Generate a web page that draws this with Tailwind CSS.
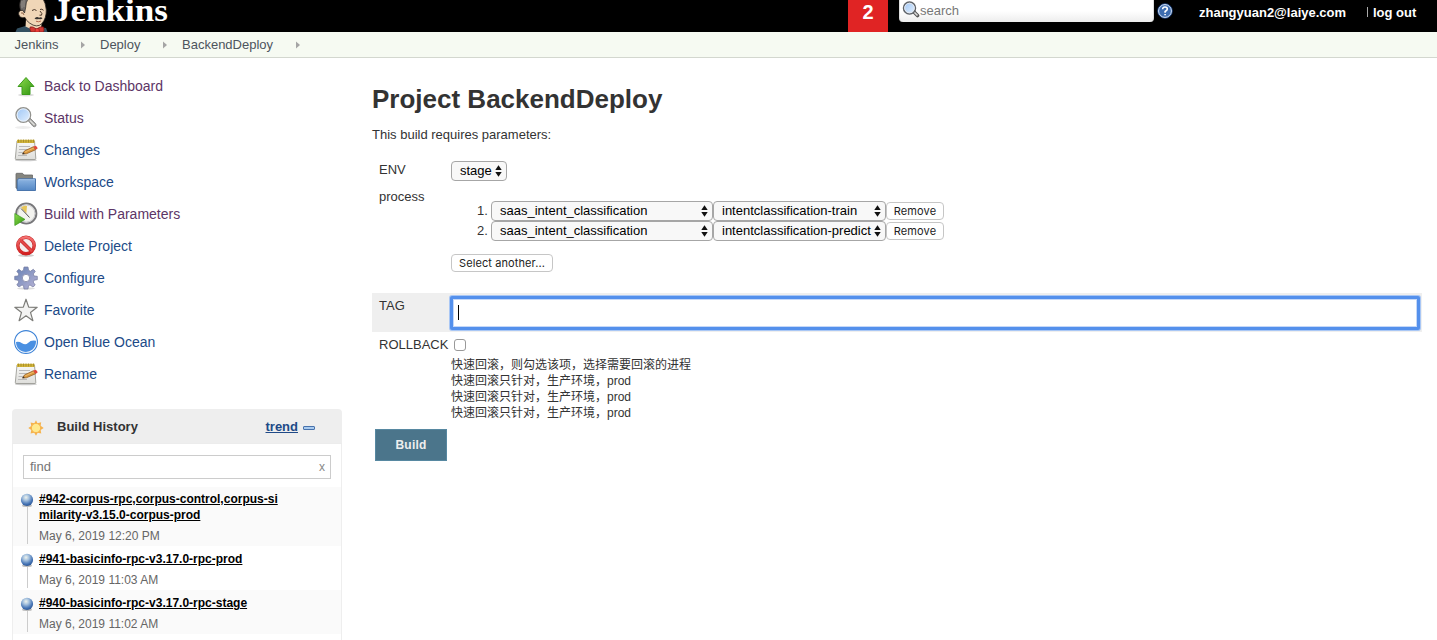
<!DOCTYPE html>
<html lang="zh-CN">
<head>
<meta charset="utf-8">
<title>BackendDeploy [Jenkins]</title>
<script src="https://cdn.jsdelivr.net/npm/@tailwindcss/browser@4"></script>
</head>
<body class="w-[1437px] h-[640px] overflow-hidden bg-white text-[13px] leading-4 text-[#333] whitespace-nowrap font-['Liberation_Sans','Noto_Sans_CJK_SC',sans-serif]">
<svg class="absolute w-0 h-0" aria-hidden="true">
  <defs>
    <linearGradient id="green" x1="0" y1="0" x2="1" y2="1"><stop offset="0" stop-color="#8fdc4e"/><stop offset="1" stop-color="#2f9410"/></linearGradient>
    <linearGradient id="glass" x1="0" y1="0" x2="1" y2="1"><stop offset="0" stop-color="#9cc4f5"/><stop offset="1" stop-color="#e6f2fe"/></linearGradient>
    <linearGradient id="folder" x1="0" y1="0" x2="0" y2="1"><stop offset="0" stop-color="#8db5e2"/><stop offset="1" stop-color="#5487c4"/></linearGradient>
    <linearGradient id="gear" x1="0" y1="0" x2="1" y2="1"><stop offset="0" stop-color="#6580b4"/><stop offset="1" stop-color="#b9b4d6"/></linearGradient>
    <linearGradient id="paper" x1="0" y1="0" x2="0" y2="1"><stop offset="0" stop-color="#f8f8f6"/><stop offset="1" stop-color="#dededb"/></linearGradient>
    <linearGradient id="red" x1="0" y1="0" x2="0" y2="1"><stop offset="0" stop-color="#f47272"/><stop offset="1" stop-color="#d42020"/></linearGradient>
    <radialGradient id="ball" cx=".42" cy=".3" r=".7"><stop offset="0" stop-color="#eef2ec"/><stop offset=".35" stop-color="#a6c2de"/><stop offset=".75" stop-color="#4a78b8"/><stop offset="1" stop-color="#2c5796"/></radialGradient>
    <symbol id="notepad" viewBox="0 0 24 24">
      <ellipse cx="12" cy="22.200" rx="11" ry="1" fill="#ccc"/>
      <path d="M3 3H20.500L21.800 20.500Q21.800 21.500 21 21.500H2Q1.200 21.500 1.300 20.500Z" fill="url(#paper)" stroke="#92928c" stroke-width=".8"/>
      <path d="M3 1.800H20.500V5H3Z" fill="#d2b43a"/>
      <path d="M4.500 1.500V4.500M7 1.500V4.500M9.500 1.500V4.500M12 1.500V4.500M14.500 1.500V4.500M17 1.500V4.500M19.500 1.500V4.500" stroke="#9a8222" stroke-width=".7"/>
      <path d="M5 8.500H16M5 11.500H13M4.500 14.500H10M4 17.500H13" stroke="#b9b9b9" stroke-width="1"/>
      <path d="M8.500 16L10.500 12.900L19.500 8.700L21.700 11.700L12.400 15.800Z" fill="#d9963c" stroke="#8a5518" stroke-width=".7"/>
      <path d="M11 14L20.300 9.800" stroke="#f3c474" stroke-width=".8"/>
      <path d="M19.200 8.800L21.500 7.700Q23.800 8.500 23.500 10.700L21.500 11.800Z" fill="#e2473c"/>
      <path d="M8.300 16.300L9.400 14.500L10.800 15.900Z" fill="#333"/>
    </symbol>
    <symbol id="lens" viewBox="0 0 24 24">
      <path d="M13.500 14L16 12L21.500 17.500Q22.700 19 21.700 20.200Q20.400 21.300 19 20.300Z" fill="#a3a3a0" stroke="#777" stroke-width=".7"/>
      <path d="M15.800 14.400L20.500 19" stroke="#e7e7e4" stroke-width="1.100"/>
      <circle cx="9.300" cy="9" r="7.300" fill="url(#glass)" stroke="#92928e" stroke-width="1.400"/>
      <circle cx="9.300" cy="9" r="6.200" fill="none" stroke="#eef4fb" stroke-width=".9"/>
    </symbol>
    <symbol id="bead" viewBox="0 0 14 14"><ellipse cx="7" cy="12.700" rx="5" ry="1.200" fill="#bbb"/><circle cx="7" cy="6.900" r="6.100" fill="url(#ball)"/></symbol>
    <symbol id="arrows" viewBox="0 0 7 12"><path d="M3.500 .2L6.700 5H.3ZM3.500 11.800L6.700 7H.3Z" fill="#111"/></symbol>
  </defs>
</svg>

<header class="flex h-8 bg-black text-white overflow-hidden">
  <svg class="w-[180px] h-8 shrink-0" viewBox="0 0 180 32">
    <path d="M15.500 32L17 28.500L27 25.500L38 27L46 28L47.500 32Z" fill="#335061"/>
    <path d="M26 19L25.500 26.500L33 30L41 29L42 20Z" fill="#f0d6b7"/>
    <path d="M28 -3H42Q46 3 46.300 10Q46.500 18 42 23.500Q37 28.500 29.500 23Q26 20.500 25 17.500Q19.500 18.500 18.600 14Q18.600 10 23 10Q22 1 28 -3Z" fill="#f0d6b7" stroke="#2b2520" stroke-width=".8"/>
    <path d="M20.500 10.500Q18.500 4 21 -1H28Q25.800 2 25.600 8L24.500 13L22.500 10Z" fill="#6f6a68" stroke="#292522" stroke-width=".7"/>
    <path d="M22 1V8M24 0V7" stroke="#aaa29c" stroke-width=".7"/>
    <path d="M21 13Q23.500 12 24 15" fill="none" stroke="#7b4d32" stroke-width=".8"/>
    <path d="M32 10.500Q34.500 8.500 36.500 10.500M40 9.500Q42 8.500 43.500 10.300M40 11Q43 14 41.500 15.200H39.500" fill="none" stroke="#39271b" stroke-width=".9"/>
    <path d="M34.500 18.500Q37 16.200 39 17.700Q41 16.400 42.500 18.200Q41 19.800 39 18.900Q37 20 34.500 18.500Z" fill="#39342f"/>
    <path d="M36 21.200Q38.500 22.400 41 21" fill="none" stroke="#a64c34" stroke-width=".8"/>
    <path d="M35 28L38 32H42L43 28Z" fill="#f7f7f4"/>
    <path d="M30 27Q32.500 26 36.500 29Q40.500 26 43.500 27Q44.500 30 43.500 32H31Q29.500 29.500 30 27Z" fill="#d33833" stroke="#7c1917" stroke-width=".7"/>
    <path d="M35.500 28.500L35 32H39.500L38.800 28.500Z" fill="#ef3d3a" stroke="#7c1917" stroke-width=".5"/>
    <text x="53" y="20.500" textLength="115" lengthAdjust="spacingAndGlyphs" font-size="32" font-weight="700" fill="#fff" style="font-family:'Liberation Serif',serif">Jenkins</text>
  </svg>
  <div class="ml-[668px] w-10 shrink-0 bg-[#e02424] text-center text-[20px] font-bold leading-6">2</div>
  <div class="ml-[11px] w-[255px] h-[22px] shrink-0 rounded-b bg-linear-to-b from-white via-white to-[#ededed] border-x border-[#ddd] flex items-center text-[#777]">
    <svg class="w-[18px] h-[18px] ml-0.5 -mt-1 shrink-0" viewBox="0 0 18 18"><path d="M11.500 11.500L15.500 15.500" stroke="#555" stroke-width="3.600" stroke-linecap="round"/><path d="M12 12L15.500 15.500" stroke="#ddd" stroke-width="1.600"/><circle cx="7.500" cy="8" r="6" fill="url(#glass)" stroke="#5f6368" stroke-width="1.500"/><circle cx="7.500" cy="8" r="4.800" fill="none" stroke="#e5e8ee"/></svg>
    <span>search</span>
  </div>
  <svg class="ml-[3px] mt-[3px] w-4 h-4 shrink-0" viewBox="0 0 16 16"><circle cx="8" cy="8" r="7.300" fill="#3d6caf" stroke="#1c3f7a" stroke-width=".9"/><circle cx="8" cy="8" r="6.400" fill="none" stroke="#dbe6f5" stroke-width="1"/><path d="M5.600 6.200Q5.800 4 8 4Q10.300 4 10.300 6Q10.300 7.200 8.100 8.500V9.700M8.100 10.900V12.300" fill="none" stroke="#fff" stroke-width="1.600"/></svg>
  <div class="ml-[26px] mt-[5px] w-[148px] shrink-0 font-bold">zhangyuan2@laiye.com</div>
  <div class="ml-5 mt-[5px] flex shrink-0"><span class="w-px h-[10px] mt-0.5 mr-[5px] bg-[#aaa]"></span><b>log out</b></div>
</header>

<nav class="flex items-center h-[26px] bg-[#f6faf2] border-b border-[#d3d7cf] text-[#4d545d] pl-[14.5px]">
  <span class="w-[66.500px]">Jenkins</span><svg class="w-1 h-2 mr-[15px]" viewBox="0 0 4 8"><path d="M0 .5L4 4L0 7.500Z" fill="#a5a5a5"/></svg>
  <span class="w-[63px]">Deploy</span><svg class="w-1 h-2 mr-[15px]" viewBox="0 0 4 8"><path d="M0 .5L4 4L0 7.500Z" fill="#a5a5a5"/></svg>
  <span class="w-[114px]">BackendDeploy</span><svg class="w-1 h-2" viewBox="0 0 4 8"><path d="M0 .5L4 4L0 7.500Z" fill="#a5a5a5"/></svg>
</nav>

<div class="flex">
  <aside class="w-[342px] pl-3 pt-3 shrink-0">
    <ul class="flex flex-col text-[14px] text-[#204a87] mb-[19px]">
      <li class="flex items-center h-8 pl-0.5 gap-1.5 text-[#5c3566]"><svg class="w-6 h-6" viewBox="0 0 24 24"><ellipse cx="12" cy="21" rx="8" ry="1.500" fill="#ddd"/><path d="M12 3.500L20 12.500H16V20.500H8V12.500H4Z" fill="url(#green)" stroke="#3d9b1c" stroke-width="1"/></svg><span>Back to Dashboard</span></li>
      <li class="flex items-center h-8 pl-0.5 gap-1.5 text-[#5c3566]"><svg class="w-6 h-6"><ellipse cx="9" cy="21.500" rx="8" ry="1.500" fill="#eee"/><use href="#lens"/></svg><span>Status</span></li>
      <li class="flex items-center h-8 pl-0.5 gap-1.5"><svg class="w-6 h-6"><use href="#notepad"/></svg><span>Changes</span></li>
      <li class="flex items-center h-8 pl-0.5 gap-1.5"><svg class="w-6 h-6" viewBox="0 0 24 24"><path d="M2 18V4Q2 3.300 2.700 3.300H8.500L10 5H18.500V9L4 19Z" fill="#85857f" stroke="#666" stroke-width=".8"/><path d="M4.500 8.800H21.500V20.500H3.200V10Z" fill="url(#folder)" stroke="#3f6ca6" stroke-width=".9"/><path d="M5 9.700H20.700" stroke="#b5d0ee" stroke-width=".7"/></svg><span>Workspace</span></li>
      <li class="flex items-center h-8 pl-0.5 gap-1.5 text-[#5c3566]"><svg class="w-6 h-6" viewBox="0 0 24 24"><circle cx="12.300" cy="11.500" r="10.100" fill="#f3f3ef" stroke="#77777a" stroke-width="1.900"/><circle cx="12.300" cy="11.500" r="8.600" fill="none" stroke="#c4c4c8" stroke-width=".9"/><path d="M12.300 11.500L7 5.500Q9.500 3.200 13 4Z" fill="#e7c65a"/><path d="M12.300 12L7 6.500M12.300 12L15.500 15.500" stroke="#555" stroke-width="1"/><path d="M.8 11.500L11 17.400L.8 23.500Z" fill="url(#green)" stroke="#3b9b1c" stroke-width=".7"/></svg><span>Build with Parameters</span></li>
      <li class="flex items-center h-8 pl-0.5 gap-1.5"><svg class="w-6 h-6" viewBox="0 0 24 24"><ellipse cx="12" cy="21.500" rx="8" ry="1.500" fill="#ccc"/><circle cx="12" cy="11.500" r="8.200" fill="#f4eeee" stroke="#c42626" stroke-width="3.400"/><path d="M6.200 5.700L17.800 17.300" stroke="#c42626" stroke-width="3.400"/><circle cx="12" cy="11.500" r="8.200" fill="none" stroke="url(#red)" stroke-width="2.400"/><path d="M6 5.500L18 17.500" stroke="#e34848" stroke-width="2.300"/></svg><span>Delete Project</span></li>
      <li class="flex items-center h-8 pl-0.5 gap-1.5"><svg class="w-6 h-6" viewBox="0 0 24 24"><ellipse cx="12" cy="22.500" rx="9" ry="1.200" fill="#ddd"/><path d="M10 1H14L14.600 4.400L16.500 5.200L19.300 3.300L21.300 5.300L19.300 8L20 10L23.300 10.300V13.700L20 14.200L19.200 16L21.200 19L19 21L16 19L14.500 19.700L14 23H10L9.500 19.700L8 19L5 21L2.800 19L4.800 16L4 14.200L.7 13.700V10.300L4 10L4.800 8L2.800 5.300L4.800 3.300L7.500 5.200L9.400 4.400Z" fill="url(#gear)" stroke="#767ba0" stroke-width=".7"/><circle cx="12" cy="12" r="3.700" fill="#fff" stroke="#8a8dac" stroke-width=".9"/></svg><span>Configure</span></li>
      <li class="flex items-center h-8 pl-0.5 gap-1.5"><svg class="w-6 h-6" viewBox="0 0 24 24"><path d="M12 1.200L14.700 9.100L23.200 9.300L16.500 14.400L18.900 22.700L12 17.800L5.100 22.700L7.500 14.400L.8 9.300L9.300 9.100Z" fill="#f3f3f2" stroke="#7d7d79" stroke-width="1.200" stroke-linejoin="round"/></svg><span>Favorite</span></li>
      <li class="flex items-center h-8 pl-0.5 gap-1.5"><svg class="w-6 h-6" viewBox="0 0 24 24"><circle cx="12" cy="12" r="11.400" fill="#fff" stroke="#3d83d7" stroke-width="1.100"/><path d="M2 12Q5 11.200 8 13.200Q11.500 15.600 14 13Q17 9.800 22 10.800Q22.300 16 18.800 19.300Q14 23.200 8 21.200Q2 18.500 2 12Z" fill="#4a90e2"/></svg><span>Open Blue Ocean</span></li>
      <li class="flex items-center h-8 pl-0.5 gap-1.5"><svg class="w-6 h-6"><use href="#notepad"/></svg><span>Rename</span></li>
    </ul>

    <section class="w-[330px] h-[240px]">
      <div class="flex items-center h-[35px] rounded-t bg-[#eee] border-b border-[#ececec] font-bold pl-4 pt-px">
        <svg class="w-4 h-4 mt-0.5 mr-[13px]" viewBox="0 0 16 16"><path d="M8 .3L9.500 3.200L13.200 2.300L12.600 5.800L15.700 8L12.600 10L13.300 13.500L9.700 12.800L8 15.700L6.200 12.800L2.600 13.600L3.300 10L.3 8L3.300 6L2.600 2.400L6.300 3.200Z" fill="#f6b34c"/><circle cx="8" cy="8" r="4.600" fill="#ffe98e" stroke="#f5b04c" stroke-width=".8"/></svg>
        <span>Build History</span>
        <a class="ml-auto text-[#204a87] underline">trend</a>
        <span class="ml-[5px] mr-[27px] mt-[3px] w-3 h-1 rounded-[1px] border border-[#4872ac] bg-[#a9cbef]"></span>
      </div>
      <div class="border-x border-[#eee]">
        <div class="h-[43px] px-2.5 pt-[11px]">
          <div class="flex items-center justify-between h-6 border border-[#ccc] px-1.5 text-[#757575]"><span>find</span><span class="text-[12px] text-[#888] -mr-px">x</span></div>
        </div>
        <div class="flex h-[59px] bg-[#fafafa] pl-[7px] text-[12px]">
          <div class="flex flex-col items-center w-[14px] mr-[5px] pt-[6px]"><svg class="w-[14px] h-[14px] shrink-0"><use href="#bead"/></svg><i class="w-px h-[37px] bg-[#ccc]"></i></div>
          <div class="pt-1"><a class="block font-bold text-black underline">#942-corpus-rpc,corpus-control,corpus-si<br>milarity-v3.15.0-corpus-prod</a><div class="mt-[5px] text-[#666]">May 6, 2019 12:20 PM</div></div>
        </div>
        <div class="flex h-11 pl-[7px] text-[12px]">
          <div class="flex flex-col items-center w-[14px] mr-[5px] pt-[7px]"><svg class="w-[14px] h-[14px] shrink-0"><use href="#bead"/></svg><i class="w-px h-[21px] bg-[#ccc]"></i></div>
          <div class="pt-[5px]"><a class="block font-bold text-black underline">#941-basicinfo-rpc-v3.17.0-rpc-prod</a><div class="mt-[5px] text-[#666]">May 6, 2019 11:03 AM</div></div>
        </div>
        <div class="flex h-11 bg-[#fafafa] pl-[7px] text-[12px]">
          <div class="flex flex-col items-center w-[14px] mr-[5px] pt-[7px]"><svg class="w-[14px] h-[14px] shrink-0"><use href="#bead"/></svg><i class="w-px h-[21px] bg-[#ccc]"></i></div>
          <div class="pt-[5px]"><a class="block font-bold text-black underline">#940-basicinfo-rpc-v3.17.0-rpc-stage</a><div class="mt-[5px] text-[#666]">May 6, 2019 11:02 AM</div></div>
        </div>
        <div class="h-3"></div>
      </div>
    </section>
  </aside>

  <main class="ml-[30px] w-[1050px] pt-[25px]">
    <h1 class="text-[26px] leading-8 font-bold">Project BackendDeploy</h1>
    <p class="mt-3 mb-[18px]">This build requires parameters:</p>
    <div class="flex h-[27px] pl-[7px]">
      <div class="w-[72px] pt-px">ENV</div>
      <div class="flex items-center justify-between w-14 h-5 rounded border border-[#a6a6a6] bg-[#f8f8f8] text-black pl-2 pr-1"><span>stage</span><svg class="w-[7px] h-3"><use href="#arrows"/></svg></div>
    </div>
    <div class="flex h-[105px] pl-[7px]">
      <div class="w-[72px] pt-px">process</div>
      <div class="pt-[13px]">
        <div class="flex h-5 items-center pl-[26px]"><span class="w-[14px]">1.</span>
          <div class="flex items-center justify-between w-[222px] h-5 rounded border border-[#a6a6a6] bg-[#f8f8f8] text-black pl-2 pr-1"><span>saas_intent_classification</span><svg class="w-[7px] h-3"><use href="#arrows"/></svg></div>
          <div class="flex items-center justify-between w-[173px] h-5 rounded border border-[#a6a6a6] bg-[#f8f8f8] text-black pl-2 pr-1"><span>intentclassification-train</span><svg class="w-[7px] h-3"><use href="#arrows"/></svg></div>
          <div class="flex items-center justify-center w-[58px] h-[18px] rounded border border-[#c6c6c6] bg-white text-[#222] text-[11px] font-['Inter',sans-serif] tracking-[0.1px]">Remove</div>
        </div>
        <div class="flex h-5 items-center pl-[26px]"><span class="w-[14px]">2.</span>
          <div class="flex items-center justify-between w-[222px] h-5 rounded border border-[#a6a6a6] bg-[#f8f8f8] text-black pl-2 pr-1"><span>saas_intent_classification</span><svg class="w-[7px] h-3"><use href="#arrows"/></svg></div>
          <div class="flex items-center justify-between w-[173px] h-5 rounded border border-[#a6a6a6] bg-[#f8f8f8] text-black pl-2 pr-1"><span>intentclassification-predict</span><svg class="w-[7px] h-3"><use href="#arrows"/></svg></div>
          <div class="flex items-center justify-center w-[58px] h-[18px] rounded border border-[#c6c6c6] bg-white text-[#222] text-[11px] font-['Inter',sans-serif] tracking-[0.1px]">Remove</div>
        </div>
        <div class="mt-[13px] flex items-center justify-center w-[102px] h-[18px] rounded border border-[#c6c6c6] bg-white text-[#222] text-[11px] font-['Inter',sans-serif] tracking-[0.1px]">Select another...</div>
      </div>
    </div>
    <div class="flex h-[39px] bg-[#efefef] pl-[7px]">
      <div class="w-[71px] pt-[5px]">TAG</div>
      <div class="mt-[3px] w-[970px] h-[34px] rounded-[2px] border-[3px] border-[#5490ec] bg-white ring-1 ring-[#a9c7f5] inset-ring-1 inset-ring-[#c5d8f8] pl-[5px] pt-1.5"><div class="w-px h-[15px] bg-black"></div></div>
    </div>
    <div class="flex h-[97px] pl-[7px]">
      <div class="w-[72px] pt-[5px]">ROLLBACK</div>
      <div>
        <div class="mt-[7px] ml-[3px] w-3 h-3 rounded-[3px] border border-[#999] bg-white"></div>
        <div class="mt-1.5 text-[12px]">快速回滚，则勾选该项，选择需要回滚的进程<br>快速回滚只针对，生产环境，prod<br>快速回滚只针对，生产环境，prod<br>快速回滚只针对，生产环境，prod</div>
      </div>
    </div>
    <div class="ml-[3px] flex items-center justify-center w-[72px] h-8 border border-[#5788a1] bg-[#4b758b] text-[#eee] font-bold text-[12px] tracking-[0.2px]">Build</div>
  </main>
</div>
</body>
</html>
